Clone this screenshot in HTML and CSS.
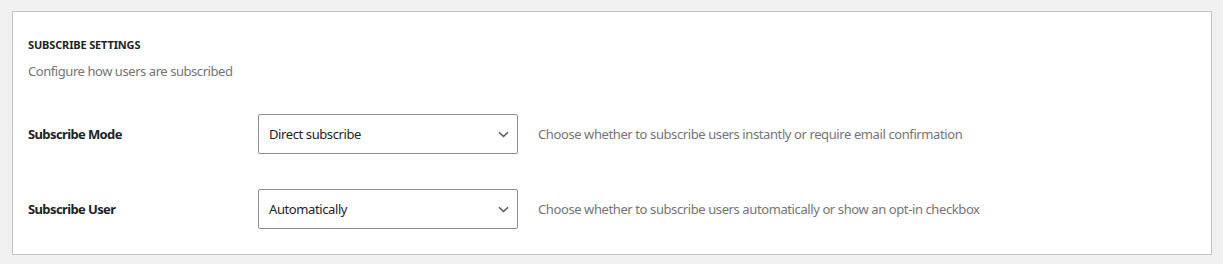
FILE: index.html
```html
<!DOCTYPE html>
<html>
  <head>
    <meta http-equiv="Content-Type" content="text/html; charset=utf-8"/>
    <title>Subscribe settings</title>
    <link rel="stylesheet" href="styles.css">
  </head>
  <body>
  <div class="card">
    <h2 class="section_title">Subscribe Settings</h2>
    <p class="section_desc">Configure how users are subscribed</p>

    <div class="field_row">
      <label class="field_label">Subscribe Mode</label>
      <div class="select_box">
        <span>Direct subscribe</span>
        <svg class="chevron" width="11" height="7" viewBox="0 0 11 7"><path d="M1 1.2 L5.5 5.5 L10 1.2" fill="none" stroke="#50575e" stroke-width="1.5"/></svg>
      </div>
      <p class="field_help">Choose whether to subscribe users instantly or require email confirmation</p>
    </div>

    <div class="field_row">
      <label class="field_label">Subscribe User</label>
      <div class="select_box">
        <span>Automatically</span>
        <svg class="chevron" width="11" height="7" viewBox="0 0 11 7"><path d="M1 1.2 L5.5 5.5 L10 1.2" fill="none" stroke="#50575e" stroke-width="1.5"/></svg>
      </div>
      <p class="field_help">Choose whether to subscribe users automatically or show an opt-in checkbox</p>
    </div>
  </div>
  </body>
</html>
```

FILE: styles.css
```css
body { margin: 0; background: #f0f0f1; font-family: "Noto Sans", "Open Sans", sans-serif; color: #1d2327; }
div.card { margin: 11px 12px 0 12px; width: 1168px; padding: 25px 15px 25px 15px; background: #fff; border: 1px solid #c3c4c7; }
h2.section_title { margin: 0; font-size: 11px; line-height: 16px; font-weight: bold; text-transform: uppercase; letter-spacing: -0.15px; }
p.section_desc { margin: 8px 0 0 0; font-size: 13px; line-height: 20px; color: #757575; letter-spacing: -0.44px; }
div.field_row { display: flex; align-items: center; margin-top: 35px; }
div.field_row:first-of-type { margin-top: 33px; }
label.field_label { width: 230px; font-size: 13px; font-weight: bold; letter-spacing: -0.62px; }
div.select_box { box-sizing: border-box; width: 260px; height: 40px; display: flex; align-items: center; justify-content: space-between; padding: 0 8px 0 10px; border: 1px solid #8c8f94; border-radius: 2px; font-size: 13px; letter-spacing: -0.4px; }
p.field_help { margin: 0 0 0 20px; font-size: 13px; color: #757575; letter-spacing: -0.4px; }
```
